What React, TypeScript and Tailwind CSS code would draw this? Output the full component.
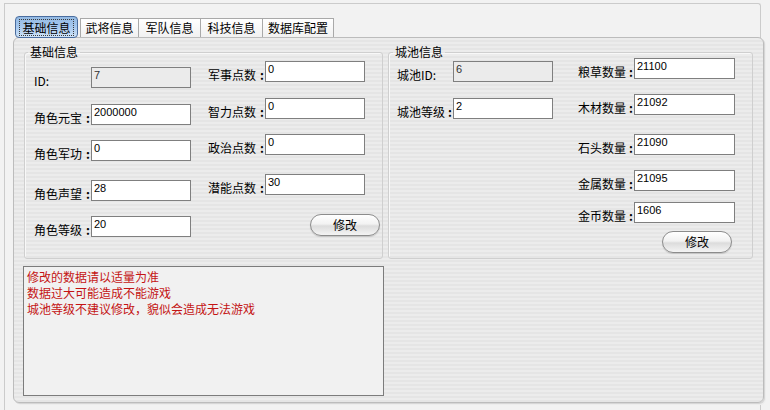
import React from 'react';

const stripes =
  'bg-[repeating-linear-gradient(180deg,#ececec_0px,#ececec_2px,#e5e5e5_2px,#e5e5e5_4px)]';

function Field({
  label,
  value,
  disabled,
  plain,
  lw = 'w-[57px]',
  iw = 'w-[100px]',
}: {
  label: string;
  value: string;
  disabled?: boolean;
  plain?: boolean;
  lw?: string;
  iw?: string;
}) {
  return (
    <div className="flex items-end">
      <span className={`${lw} flex justify-between text-[12px] leading-[14px] text-black`}>
        <span>{label}</span>
        {!plain && <span className="font-bold pr-[1px]">:</span>}
      </span>
      <div
        className={`${iw} h-[21px] border border-[#7f7f7f] pl-[2px] pt-[1px] font-['Liberation_Sans',sans-serif] text-[11px] leading-[12px] ${
          disabled ? 'bg-[#ebebeb] text-[#333]' : 'bg-white text-black'
        }`}
      >
        {value}
      </div>
    </div>
  );
}

function PillButton({ className = '' }: { className?: string }) {
  return (
    <button
      className={`w-[70px] h-[22px] rounded-full border border-[#8c8c8c] bg-[linear-gradient(180deg,#ffffff_0%,#f2f2f2_45%,#dcdcdc_55%,#f4f4f4_100%)] text-[12px] leading-[20px] text-black shadow-[0_1px_1px_rgba(0,0,0,0.15)] ${className}`}
    >
      修改
    </button>
  );
}

function Tab({ label, active, w }: { label: string; active?: boolean; w: string }) {
  if (active) {
    return (
      <div
        className={`${w} h-[22px] relative z-10 flex items-center justify-center rounded-[4px] border border-[#4a6d9f] bg-[linear-gradient(180deg,#93b9e3_0%,#a6c8ee_50%,#cfe3f8_100%)] text-[12px] text-black`}
      >
        <span className="px-[2px] leading-[15px] border border-dotted border-[#3a3a3a]">{label}</span>
      </div>
    );
  }
  return (
    <div
      className={`${w} h-[19px] mb-[1px] -ml-[1px] first:ml-0 flex items-center justify-center border border-b-0 border-[#a9a9a9] bg-[linear-gradient(180deg,#ffffff,#f1f1f1)] text-[12px] text-black`}
    >
      {label}
    </div>
  );
}

export default function App() {
  return (
    <div className="w-[770px] h-[410px] overflow-hidden bg-[#f2f2f2] font-['Noto_Sans_CJK_SC','Liberation_Sans',sans-serif]">
      <div className="ml-[4px] mt-[3px] w-[757px] h-[407px] border-l border-t border-r border-[#cbcbcb] rounded-tr-[3px]">
        <div className="flex items-end h-[22px] mt-[12px] pl-[10px]">
          <Tab label="基础信息" active w="w-[63px]" />
          <div className="flex items-end ml-[2px]">
            <Tab label="武将信息" w="w-[59px]" />
            <Tab label="军队信息" w="w-[63px]" />
            <Tab label="科技信息" w="w-[63px]" />
            <Tab label="数据库配置" w="w-[72px]" />
          </div>
        </div>

        <div
          className={`relative -mt-[1px] ml-[8px] w-[751px] h-[366px] rounded-[6px] border border-[#bcbcbc] shadow-[1px_1px_0_#d6d6d6,2px_2px_0_#ededed] pt-[7px] pl-[10px] ${stripes}`}
        >
          <div className="flex gap-[5px]">
            <fieldset className="w-[359px] h-[214px] border border-[#cfcfcf] rounded-[3px] shadow-[inset_1px_1px_0_#f8f8f8]">
              <legend className="ml-[3px] px-[2px] text-[12px] leading-[14px] text-black">基础信息</legend>
              <div className="flex pl-[9px]">
                <div className="w-[174px] flex flex-col mt-[8px]">
                  <Field label="ID:" value="7" disabled plain />
                  <div className="mt-[16px]">
                    <Field label="角色元宝" value="2000000" />
                  </div>
                  <div className="mt-[15px]">
                    <Field label="角色军功" value="0" />
                  </div>
                  <div className="mt-[19px]">
                    <Field label="角色声望" value="28" />
                  </div>
                  <div className="mt-[15px]">
                    <Field label="角色等级" value="20" />
                  </div>
                </div>
                <div className="flex flex-col mt-[2px]">
                  <Field label="军事点数" value="0" />
                  <div className="mt-[16px]">
                    <Field label="智力点数" value="0" />
                  </div>
                  <div className="mt-[15px]">
                    <Field label="政治点数" value="0" />
                  </div>
                  <div className="mt-[19px]">
                    <Field label="潜能点数" value="30" />
                  </div>
                  <PillButton className="mt-[19px] ml-[102px]" />
                </div>
              </div>
            </fieldset>

            <fieldset className="w-[365px] h-[214px] border border-[#cfcfcf] rounded-[3px] shadow-[inset_1px_1px_0_#f8f8f8]">
              <legend className="ml-[4px] px-[2px] text-[12px] leading-[14px] text-black">城池信息</legend>
              <div className="flex pl-[8px]">
                <div className="w-[181px] flex flex-col mt-[2px]">
                  <Field label="城池ID:" value="6" disabled plain lw="w-[56px]" />
                  <div className="mt-[16px]">
                    <Field label="城池等级" value="2" lw="w-[56px]" />
                  </div>
                </div>
                <div className="flex flex-col -mt-[1px]">
                  <Field label="粮草数量" value="21100" lw="w-[56px]" iw="w-[101px]" />
                  <div className="mt-[15px]">
                    <Field label="木材数量" value="21092" lw="w-[56px]" iw="w-[101px]" />
                  </div>
                  <div className="mt-[19px]">
                    <Field label="石头数量" value="21090" lw="w-[56px]" iw="w-[101px]" />
                  </div>
                  <div className="mt-[15px]">
                    <Field label="金属数量" value="21095" lw="w-[56px]" iw="w-[101px]" />
                  </div>
                  <div className="mt-[11px]">
                    <Field label="金币数量" value="1606" lw="w-[56px]" iw="w-[101px]" />
                  </div>
                  <PillButton className="mt-[8px] ml-[84px]" />
                </div>
              </div>
            </fieldset>
          </div>

          <div className="mt-[7px] -ml-[1px] w-[361px] h-[130px] border border-[#7c7c7c] bg-[#f1f1f1] pl-[3px] pt-[2px] text-[12px] leading-[16px] text-[#c41414]">
            <div>修改的数据请以适量为准</div>
            <div>数据过大可能造成不能游戏</div>
            <div>城池等级不建议修改，貌似会造成无法游戏</div>
          </div>
        </div>
      </div>
    </div>
  );
}
